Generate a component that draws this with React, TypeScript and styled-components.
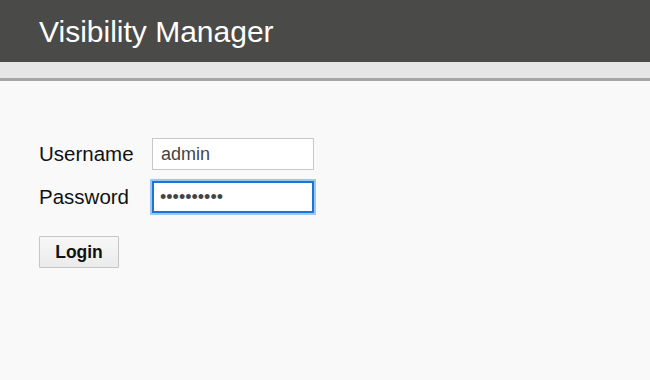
import { FC } from 'react';
import styled, { createGlobalStyle } from 'styled-components';

const GlobalStyle = createGlobalStyle`
  html, body {
    margin: 0;
    padding: 0;
    background: #f9f9f9;
    font-family: 'Liberation Sans', Arial, sans-serif;
  }
`;

const Header = styled.header`
  height: 62px;
  background: #4a4a48;
  display: flex;
  align-items: center;
  padding-left: 39px;
  h1 {
    margin: 0;
    font-weight: 400;
    font-size: 30px;
    color: #ffffff;
    line-height: 1;
    padding-top: 2px;
  }
`;

const Band = styled.div`
  height: 16px;
  background: #e6e6e6;
  border-bottom: 3px solid #a6a6a6;
`;

const Main = styled.main`
  padding: 57px 39px 0;
`;

const Form = styled.form`
  display: grid;
  grid-template-columns: 113px 162px;
  row-gap: 11px;
  align-items: center;
`;

const Label = styled.label`
  font-size: 20.5px;
  color: #111;
`;

const Input = styled.input<{ focused?: boolean }>`
  box-sizing: border-box;
  width: 162px;
  height: 32px;
  padding: 0 ${p => (p.focused ? '6px' : '8px')};
  font-family: 'Liberation Sans', Arial, sans-serif;
  font-size: 18px;
  color: #444;
  background: #fff;
  border: 1px solid ${p => (p.focused ? '#1e74d6' : '#c8c8c8')};
  box-shadow: ${p => (p.focused ? '0 0 0 2px #9fc6f1' : 'none')};
  border-width: ${p => (p.focused ? '2px' : '1px')};
  outline: none;
  border-radius: 0;
  caret-color: #111;
`;

const Actions = styled.div`
  grid-column: 1 / -1;
  margin-top: 12px;
`;

const Button = styled.button`
  width: 80px;
  height: 32px;
  font-family: 'Liberation Sans', Arial, sans-serif;
  font-size: 17.5px;
  font-weight: 700;
  color: #111;
  background: linear-gradient(#f7f7f7, #ebebeb);
  border: 1px solid #c6c6c6;
  border-radius: 1px;
  box-shadow: 0 1px 1px rgba(0, 0, 0, 0.08);
  cursor: pointer;
`;

const App: FC = () => {
  return (
    <>
      <GlobalStyle />
      <Header>
        <h1>Visibility Manager</h1>
      </Header>
      <Band />
      <Main>
        <Form onSubmit={e => e.preventDefault()}>
          <Label htmlFor="username">Username</Label>
          <Input id="username" type="text" defaultValue="admin" />
          <Label htmlFor="password">Password</Label>
          <Input id="password" type="password" defaultValue="secretpass" focused autoFocus />
          <Actions>
            <Button type="submit">Login</Button>
          </Actions>
        </Form>
      </Main>
    </>
  );
};

export default App;
